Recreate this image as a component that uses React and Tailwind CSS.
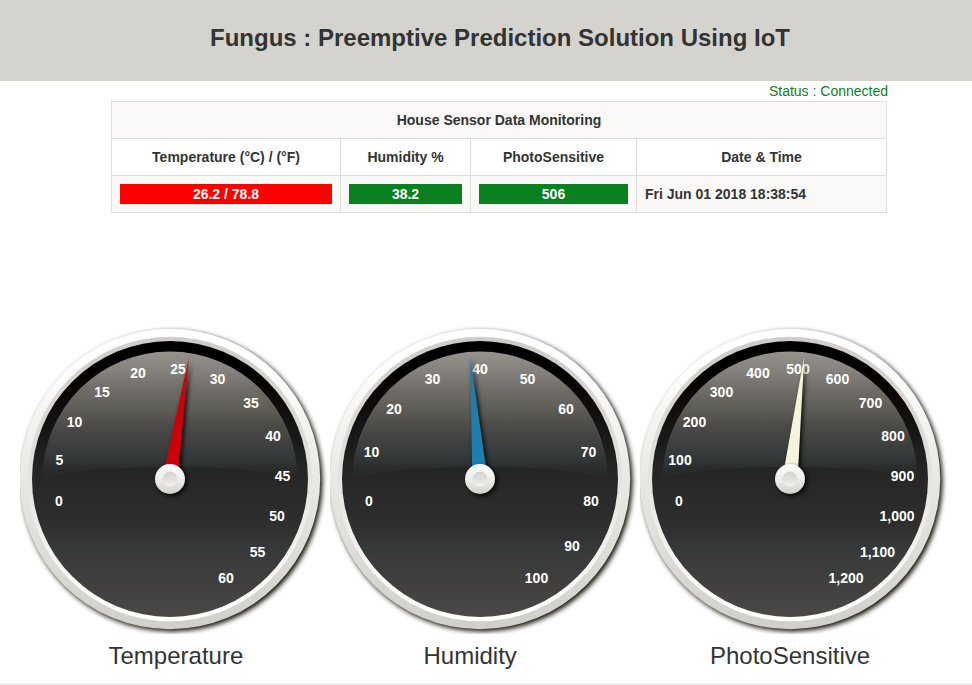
import React from "react";

const gauges = [
  {
    id: "temperature",
    title: "Temperature",
    titleClass: "pl-[88.5px]",
    needle: "#cb020c",
    angle: 8.9,
    labels: [
      ["0", 39, 177], ["5", 39.5, 136], ["10", 54.5, 98], ["15", 82, 68], ["20", 118, 49],
      ["25", 158, 45], ["30", 197.5, 55], ["35", 231, 79], ["40", 253, 112], ["45", 262.5, 152],
      ["50", 257, 192], ["55", 237.5, 228], ["60", 206, 254],
    ],
  },
  {
    id: "humidity",
    title: "Humidity",
    titleClass: "pl-[93.5px]",
    needle: "#1d7fae",
    angle: -4.6,
    labels: [
      ["0", 39, 177], ["10", 41.5, 128], ["20", 64, 85], ["30", 102.5, 55], ["40", 150, 45],
      ["50", 197.5, 55], ["60", 236, 85], ["70", 258.5, 128], ["80", 261, 177], ["90", 242, 222],
      ["100", 206.5, 254],
    ],
  },
  {
    id: "photo",
    title: "PhotoSensitive",
    titleClass: "pl-[70px]",
    needle: "#f5f3da",
    angle: 6.6,
    labels: [
      ["0", 39, 177], ["100", 40, 136], ["200", 54.5, 98], ["300", 81.5, 68], ["400", 118, 49],
      ["500", 158, 45], ["600", 197.5, 55], ["700", 230.5, 79], ["800", 253, 112], ["900", 262.5, 152],
      ["1,000", 257, 192], ["1,100", 237.5, 228], ["1,200", 206, 254],
    ],
  },
];

function Gradient({ id, stops }) {
  return (
    <linearGradient id={id} x1="0" y1="0" x2="0" y2="1">
      {stops.map(([offset, color]) => (
        <stop key={offset} offset={offset} stopColor={color} />
      ))}
    </linearGradient>
  );
}

function Gauge({ id, needle, angle, labels }) {
  const ref = (name) => `url(#${id}-${name})`;
  return (
    <svg width="310" height="310" viewBox="0 0 310 310" className="block overflow-hidden">
      <defs>
        <Gradient id={`${id}-rim`} stops={[[0, "#ffffff"], [0.15, "#fdfdfd"], [0.5, "#e9e8e4"], [1, "#d1cfca"]]} />
        <Gradient id={`${id}-bevel`} stops={[[0, "#cfccc7"], [0.5, "#e6e4e0"], [0.8, "#f6f5f3"], [1, "#ffffff"]]} />
        <Gradient
          id={`${id}-face`}
          stops={[[0, "#000000"], [0.12, "#040000"], [0.22, "#100a0a"], [0.32, "#141616"], [0.45, "#242424"], [0.55, "#292929"], [0.66, "#2d2e2d"], [0.75, "#353938"], [0.84, "#3d3e3d"], [0.9, "#434140"], [1, "#4b4846"]]}
        />
        <Gradient
          id={`${id}-glass`}
          stops={[[0, "#96938d"], [0.15, "#85827d"], [0.3, "#706d68"], [0.45, "#5f5d56"], [0.6, "#4b4947"], [0.72, "#404040"], [0.82, "#333939"], [0.92, "#2a2c2c"], [1, "#272727"]]}
        />
        <Gradient id={`${id}-hub`} stops={[[0, "#ffffff"], [0.5, "#eeedeb"], [1, "#d3d0cb"]]} />
        <Gradient id={`${id}-dimple`} stops={[[0, "#d6d4d0"], [0.5, "#e1dfdc"], [1, "#f4f3f1"]]} />
        <linearGradient id={`${id}-needle`} gradientUnits="userSpaceOnUse" x1="0" y1="31" x2="0" y2="50">
          <stop offset="0" stopColor={needle} stopOpacity="0.35" />
          <stop offset="0.5" stopColor={needle} stopOpacity="0.85" />
          <stop offset="1" stopColor={needle} />
        </linearGradient>
        <filter id={`${id}-shadow`} x="-20%" y="-20%" width="140%" height="140%" colorInterpolationFilters="sRGB">
          <feDropShadow dx="2.2" dy="2.2" stdDeviation="2.8" floodColor="#0c0a00" floodOpacity="1" />
        </filter>
        <filter id={`${id}-soft`} x="-150%" y="-20%" width="400%" height="150%" colorInterpolationFilters="sRGB">
          <feDropShadow dx="2" dy="2" stdDeviation="2" floodColor="#000000" floodOpacity="0.85" />
        </filter>
      </defs>
      <circle cx="150" cy="155" r="150.2" fill={ref("rim")} filter={ref("shadow")} />
      <circle cx="150" cy="155" r="142.2" fill={ref("bevel")} />
      <circle cx="150" cy="155" r="138" fill={ref("face")} />
      <path d="M22.5 155 A127.5 127.5 0 0 1 277.5 155 C240 139 60 139 22.5 155 Z" fill={ref("glass")} />
      <g fill="#ffffff" fontSize="14" fontWeight="700" textAnchor="middle">
        {labels.map(([text, x, y]) => (
          <text key={text} x={x} y={y + 5}>{text}</text>
        ))}
      </g>
      <g filter={ref("soft")}>
        <path d="M150 31 L157.6 155 L142.4 155 Z" fill={ref("needle")} transform={`rotate(${angle} 150 155)`} />
      </g>
      <circle cx="150" cy="155" r="15" fill={ref("hub")} filter={ref("soft")} />
      <circle cx="150" cy="155" r="7.5" fill={ref("dimple")} />
    </svg>
  );
}

function Cell({ className = "", children }) {
  return (
    <div className={`flex h-[37px] items-center border-r border-b border-[#dfddd9] px-2 ${className}`}>
      {children}
    </div>
  );
}

export default function App() {
  return (
    <div className="flex h-[685px] w-[972px] flex-col overflow-hidden bg-white font-['Liberation_Sans',Arial,sans-serif] text-[#323433]">
      <header className="flex h-[81px] shrink-0 justify-center bg-[#d5d3cd] pt-[22px] pl-7">
        <h1 className="text-[24px] leading-8 font-bold whitespace-nowrap">
          Fungus : Preemptive Prediction Solution Using IoT
        </h1>
      </header>

      <div className="h-5 shrink-0 pr-[84px] text-right text-sm leading-5 text-[#0a8021]">Status : Connected</div>

      <section className="ml-[111px] grid w-[776px] shrink-0 grid-cols-[229px_130px_166px_250px] border-t border-l border-[#dfddd9] text-sm font-bold">
        <Cell className="col-span-4 justify-center bg-[#faf9f8]">House Sensor Data Monitoring</Cell>
        <Cell className="justify-center">Temperature (°C) / (°F)</Cell>
        <Cell className="justify-center">Humidity %</Cell>
        <Cell className="justify-center">PhotoSensitive</Cell>
        <Cell className="justify-center">Date &amp; Time</Cell>
        <Cell className="bg-[#faf9f8]">
          <div className="h-5 w-full bg-[#ff0000] text-center text-white">26.2 / 78.8</div>
        </Cell>
        <Cell className="bg-[#faf9f8]">
          <div className="h-5 w-full bg-[#0a8021] text-center text-white">38.2</div>
        </Cell>
        <Cell className="bg-[#faf9f8]">
          <div className="h-5 w-full bg-[#0a8021] text-center text-white">506</div>
        </Cell>
        <Cell className="bg-[#faf9f8]">Fri Jun 01 2018 18:38:54</Cell>
      </section>

      <main className="mt-[111px] ml-5 grid shrink-0 grid-cols-[310px_310px_310px]">
        {gauges.map((gauge) => (
          <section key={gauge.id}>
            <Gauge {...gauge} />
            <h2 className={`mt-[6px] text-[24px] leading-8 ${gauge.titleClass}`}>{gauge.title}</h2>
          </section>
        ))}
      </main>

      <footer className="mt-auto h-[2px] shrink-0 bg-[#f0f0f0]" />
    </div>
  );
}
